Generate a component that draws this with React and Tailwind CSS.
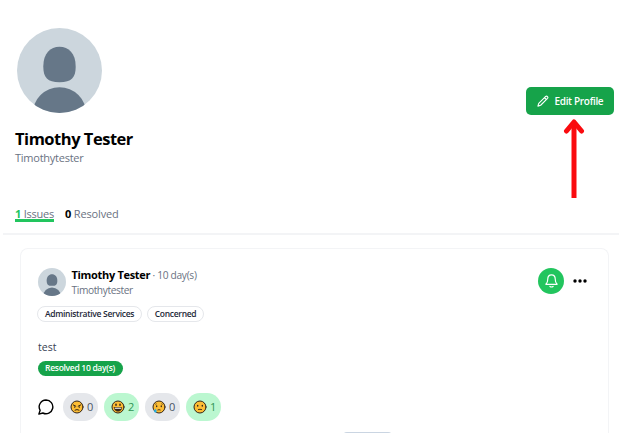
import React, { useId } from 'react';

function Avatar({ className }) {
  const id = useId();
  return (
    <svg viewBox="0 0 84 84" className={className} aria-hidden="true">
      <clipPath id={id}>
        <circle cx="42" cy="42" r="42" />
      </clipPath>
      <g clipPath={`url(#${id})`} fill="#667788">
        <rect width="84" height="84" fill="#ccd6dd" />
        <path d="M26 38C26 25 33 18.500 42 18.500S58 25 58 38C58 49 54 53.500 42 53.500S26 49 26 38Z" />
        <circle cx="42" cy="85" r="26.500" />
      </g>
    </svg>
  );
}

function Pencil() {
  return (
    <svg viewBox="0 0 24 24" className="h-3 w-3 shrink-0" fill="none" stroke="white" strokeWidth="2.200" strokeLinecap="round" strokeLinejoin="round">
      <path d="m15 5.200 2.300-2.300a2.700 2.700 0 0 1 3.800 3.800L7.300 20.500 1.800 22.200 3.500 16.700ZM15 5.200 18.800 9" />
    </svg>
  );
}

function Bell() {
  return (
    <svg viewBox="0 0 24 24" className="h-[15px] w-[15px]" fill="none" stroke="white" strokeWidth="1.900" strokeLinecap="round" strokeLinejoin="round">
      <path d="M3.300 17.500c2.300-2 2.700-4 2.700-7.500 0-4 2.300-7 6-7s6 3 6 7c0 3.500.4 5.500 2.700 7.500q.6.800-.5.800H3.800q-1.100 0-.5-.8ZM9.500 21.500q2.500 1.800 5 0" />
    </svg>
  );
}

function Face({ kind }) {
  return (
    <svg viewBox="0 0 14 14" className="h-[14px] w-[14px] shrink-0" fill="none" stroke="#33261a" strokeLinecap="round">
      <circle cx="7" cy="7" r="6" fill="#fdbd35" strokeWidth="1" />
      {kind === 'angry' && (
        <g strokeWidth="1">
          <path d="M3.200 4.900 5.800 6.200M10.800 4.900 8.200 6.200M5 10.100q2-1.200 4 0" />
          <path d="M4.700 6.900v.3M9.300 6.900v.3" strokeWidth="1.200" />
        </g>
      )}
      {kind === 'happy' && (
        <>
          <path d="M5 4.300v1M9 4.300v1" strokeWidth="1.500" />
          <path d="M3.300 7.500h7.400c0 2.500-1.500 3.800-3.700 3.800s-3.700-1.300-3.700-3.800Z" fill="#33261a" strokeWidth=".5" />
          <path d="M4.300 8.300h5.400" stroke="white" strokeWidth="1.100" />
        </>
      )}
      {kind === 'crying' && (
        <>
          <path d="M4.700 5.900v.6M9.300 5.900v.6" strokeWidth="1.300" />
          <path d="M5.800 9.900q1.200-.7 2.400 0" strokeWidth=".9" />
          <path d="m3.400 4.300 1.200-.5M10.600 4.300l-1.200-.5" strokeWidth=".5" />
          <path d="M3.400 8.800c-.8 1.100-1.300 1.800-1.300 2.500a1.300 1.300 0 0 0 2.600 0c0-.7-.5-1.400-1.300-2.500Z" fill="#22b1e8" stroke="none" />
        </>
      )}
      {kind === 'sad' && (
        <>
          <path d="M4.700 5.400v.6M9.300 5.400v.6" strokeWidth="1.400" />
          <path d="M5.400 9.500q1.600-.5 3.200 0" strokeWidth=".9" />
        </>
      )}
    </svg>
  );
}

const reactions = [
  { kind: 'angry', count: 0, tone: 'bg-gray-200 text-gray-600' },
  { kind: 'happy', count: 2, tone: 'bg-[#bbf7d0] text-[#2f9452]' },
  { kind: 'crying', count: 0, tone: 'bg-gray-200 text-gray-600' },
  { kind: 'sad', count: 1, tone: 'bg-[#bbf7d0] text-[#2f9452]' },
];

export default function App() {
  return (
    <div className="flex h-[433px] w-[619px] flex-col overflow-hidden bg-white font-['Open_Sans','Noto_Sans',sans-serif] whitespace-nowrap text-black">
      <header className="flex h-[205px] shrink-0 justify-between pr-[4.600px] pl-[15px]">
        <div className="pt-7">
          <Avatar className="ml-0.5 h-[85px] w-[85px]" />
          <h1 className="mt-[14px] text-[16.500px] leading-6 font-bold tracking-[-0.480px]">Timothy Tester</h1>
          <p className="text-[11px] leading-[14px] tracking-[-0.250px] text-gray-500">Timothytester</p>
        </div>
        <div className="flex w-[88px] flex-col items-center pt-[87.400px]">
          <button className="flex h-7 w-[88px] items-center justify-center gap-[5px] rounded-[5px] bg-[#16a34a] text-[10px] font-semibold tracking-[-0.320px] text-white">
            <Pencil />
            <span className="pt-px">Edit Profile</span>
          </button>
          <svg viewBox="0 0 22 81" className="mt-[2.600px] ml-[7px] h-[81px] w-[22px] shrink-0" fill="none" stroke="#fa0b0f" strokeWidth="5">
            <path d="M11 80V4" />
            <path d="M3.500 13 11 4l7.500 9" strokeLinecap="round" strokeLinejoin="round" />
          </svg>
        </div>
      </header>

      <nav className="ml-[3px] flex h-[30px] shrink-0 items-start gap-[11px] border-b-2 border-gray-100 pl-3 text-[11px] leading-[14px] text-gray-500">
        <span className="mt-0.5 h-[15px] w-[39px] border-b-[3px] border-[#22c55e] tracking-[-0.250px]">
          <b className="text-[#22c55e]">1</b> Issues
        </span>
        <span className="mt-0.5 tracking-[-0.150px]">
          <b className="text-black">0</b> Resolved
        </span>
      </nav>

      <main className="mt-[13px] ml-5 h-[220px] w-[589px] shrink-0 rounded-t-lg border border-b-0 border-gray-100 px-4 pt-[18px]">
        <div className="flex h-[29px] items-center justify-between">
          <div className="flex items-center">
            <Avatar className="ml-px h-7 w-7" />
            <div className="ml-[5.500px] pt-px">
              <p className="text-[10.200px] leading-[15px] tracking-[-0.300px] text-gray-500">
                <b className="text-[11px] tracking-[-0.320px] text-black">Timothy Tester</b> · 10 day(s)
              </p>
              <p className="text-[10.200px] leading-[15px] tracking-[-0.400px] text-gray-500">Timothytester</p>
            </div>
          </div>
          <div className="flex -translate-y-px items-center gap-[9px] pr-[5px]">
            <span className="flex h-[26px] w-[26px] items-center justify-center rounded-full bg-[#22c55e]">
              <Bell />
            </span>
            <svg viewBox="0 0 14 4" className="h-1 w-[14px]" fill="black">
              <circle cx="2" cy="2" r="1.700" />
              <circle cx="7" cy="2" r="1.700" />
              <circle cx="12" cy="2" r="1.700" />
            </svg>
          </div>
        </div>

        <div className="mt-[10px] flex gap-[5px] text-[8.500px] font-semibold tracking-[-0.300px] text-gray-800">
          <span className="flex h-4 w-[105px] items-center justify-center rounded-full border border-gray-200">Administrative Services</span>
          <span className="flex h-4 w-[57px] items-center justify-center rounded-full border border-gray-200">Concerned</span>
        </div>

        <p className="mt-[18px] pl-px text-[10.500px] leading-[15px] text-gray-700">test</p>
        <span className="mt-[6px] ml-[0.500px] flex h-[15px] w-[85px] items-center justify-center rounded-full bg-[#16a34a] text-[8.500px] font-semibold tracking-[-0.300px] text-white">
          Resolved 10 day(s)
        </span>

        <div className="mt-[17px] flex items-center gap-[6px]">
          <svg viewBox="0 0 24 24" className="mr-[3px] ml-px h-4 w-4" fill="none" stroke="black" strokeWidth="2.100" strokeLinejoin="round">
            <path d="M12 1.500A10.300 10.300 0 1 1 7.300 21L1.300 22.700 3.200 17A10.300 10.300 0 0 1 12 1.500Z" />
          </svg>
          {reactions.map(({ kind, count, tone }) => (
            <span key={kind} className={`flex h-7 w-[35px] items-center justify-center gap-[3.500px] rounded-full pl-0.5 text-[11px] ${tone}`}>
              <Face kind={kind} />
              <span className="pt-px">{count}</span>
            </span>
          ))}
        </div>
        <div className="mt-[11px] ml-[306px] h-5 w-[49px] rounded-t-sm border-t border-slate-300" />
      </main>
    </div>
  );
}
